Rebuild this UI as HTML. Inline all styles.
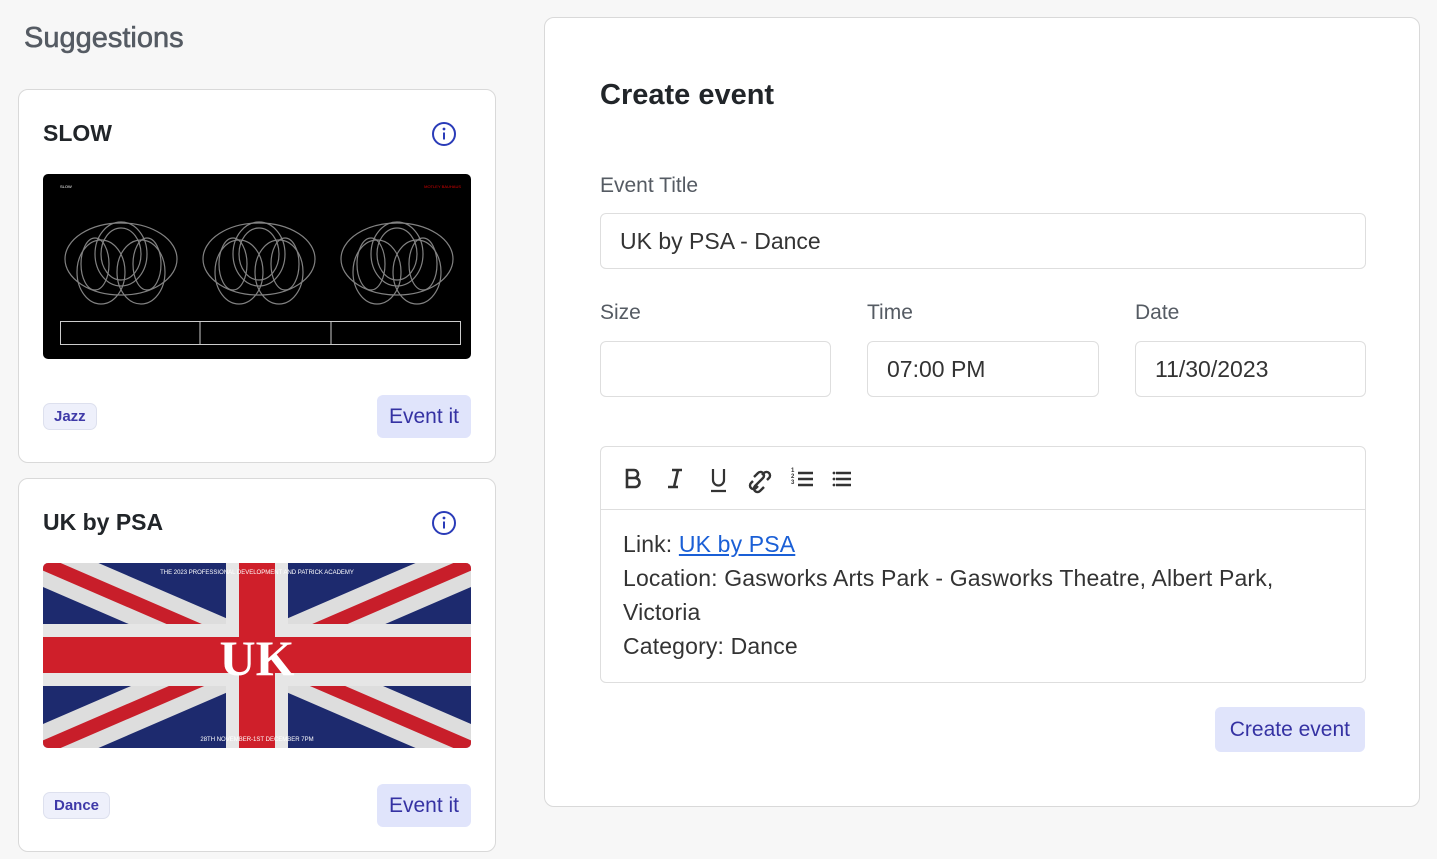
<!DOCTYPE html>
<html><head><meta charset="utf-8"><style>
*{box-sizing:border-box;margin:0;padding:0}
body{width:1437px;height:859px;background:#f7f7f7;font-family:"Liberation Sans",sans-serif;position:relative;overflow:hidden;color:#212529}
.h{position:absolute;left:24px;top:22px;font-size:29px;color:#555b63;-webkit-text-stroke:0.6px #555b63}
.card{position:absolute;left:18px;width:478px;height:374px;background:#fff;border:1px solid #d9d9d9;border-radius:10px}
.title{position:absolute;left:24px;top:30px;font-size:23px;font-weight:bold;color:#212529}
.info{position:absolute;left:412px;top:31px}
.img{position:absolute;left:24px;top:84px;width:428px;height:185px;border-radius:5px;overflow:hidden}
.tag{position:absolute;left:24px;top:313px;height:27px;padding:0 10px;border:1px solid #dde0ee;background:#eef0fb;border-radius:7px;font-size:15px;font-weight:bold;color:#3f3aa8;line-height:25px}
.btn{position:absolute;right:24px;top:305px;height:43px;padding:0 12px;background:#e0e4fb;border-radius:6px;font-size:21px;color:#3532a3;line-height:43px}
.panel{position:absolute;left:544px;top:17px;width:876px;height:790px;background:#fff;border:1px solid #d9d9d9;border-radius:10px}
.lbl{position:absolute;font-size:21px;color:#555b63}
.inp{position:absolute;height:56px;border:1px solid #dedede;border-radius:6px;font-size:23px;color:#333;padding-left:19px;line-height:54px}
</style></head><body>
<div class="h">Suggestions</div>

<div class="card" style="top:89px">
<div class="title">SLOW</div>
<svg class="info" width="26" height="26" viewBox="0 0 26 26"><circle cx="13" cy="13" r="11" fill="none" stroke="#2a3bb8" stroke-width="2"/><circle cx="13" cy="8" r="1.4" fill="#2a3bb8"/><path d="M13 11.5v7" stroke="#2a3bb8" stroke-width="2"/></svg>
<div class="img" style="background:#000">
<svg width="428" height="185">
<g fill="none" stroke="#999" stroke-width="1.2" opacity=".85">
<g id="hd"><ellipse cx="78" cy="85" rx="56" ry="36"/><ellipse cx="78" cy="80" rx="26" ry="32"/><ellipse cx="78" cy="80" rx="20" ry="26"/><ellipse cx="58" cy="98" rx="24" ry="32"/><ellipse cx="98" cy="98" rx="24" ry="32"/><ellipse cx="52" cy="90" rx="14" ry="26"/><ellipse cx="104" cy="90" rx="14" ry="26"/></g>
<use href="#hd" x="138"/><use href="#hd" x="276"/>
</g>
<rect x="17.5" y="147.5" width="400" height="23" fill="none" stroke="#ccc"/>
<path d="M157 148v22M288 148v22" stroke="#ccc"/>
<text x="17" y="14" fill="#fff" font-size="4">SLOW</text>
<text x="418" y="14" fill="#d00" font-size="4" text-anchor="end">MOTLEY BAUHAUS</text>
</svg></div>
<div class="tag">Jazz</div>
<div class="btn">Event it</div>
</div>

<div class="card" style="top:478px">
<div class="title">UK by PSA</div>
<svg class="info" width="26" height="26" viewBox="0 0 26 26"><circle cx="13" cy="13" r="11" fill="none" stroke="#2a3bb8" stroke-width="2"/><circle cx="13" cy="8" r="1.4" fill="#2a3bb8"/><path d="M13 11.5v7" stroke="#2a3bb8" stroke-width="2"/></svg>
<div class="img">
<svg width="428" height="185">
<rect width="428" height="185" fill="#1d2a6e"/>
<path d="M0 0L428 185M428 0L0 185" stroke="#ddd" stroke-width="44"/>
<path d="M0 0L428 185M428 0L0 185" stroke="#c81e2a" stroke-width="14"/>
<path d="M214 0v185M0 92h428" stroke="#e6e6e6" stroke-width="62"/>
<path d="M214 0v185M0 92h428" stroke="#cf1f2a" stroke-width="36"/>
<text x="214" y="112" fill="#fff" font-family="Liberation Serif" font-size="50" font-weight="bold" text-anchor="middle">UK</text>
<text x="214" y="11" fill="#fff" font-size="6" text-anchor="middle">THE 2023 PROFESSIONAL DEVELOPMENT AND PATRICK ACADEMY</text>
<text x="214" y="178" fill="#fff" font-size="6" text-anchor="middle">28TH NOVEMBER-1ST DECEMBER 7PM</text>
</svg></div>
<div class="tag">Dance</div>
<div class="btn">Event it</div>
</div>

<div class="panel">
<div style="position:absolute;left:55px;top:61px;font-size:29px;font-weight:bold;color:#212529">Create event</div>
<div class="lbl" style="left:55px;top:156px">Event Title</div>
<div class="inp" style="left:55px;top:195px;width:766px">UK by PSA - Dance</div>
<div class="lbl" style="left:55px;top:283px">Size</div>
<div class="lbl" style="left:322px;top:283px">Time</div>
<div class="lbl" style="left:590px;top:283px">Date</div>
<div class="inp" style="left:55px;top:323px;width:231px"></div>
<div class="inp" style="left:322px;top:323px;width:232px">07:00 PM</div>
<div class="inp" style="left:590px;top:323px;width:231px">11/30/2023</div>
<div style="position:absolute;left:55px;top:428px;width:766px;height:237px;border:1px solid #dedede;border-radius:6px">
<div style="height:63px;border-bottom:1px solid #dedede;position:relative">
<svg width="260" height="63" style="position:absolute;left:0;top:0" fill="none" stroke="#333" stroke-width="2.6">
<path d="M26 23h7a4 4 0 0 1 0 8h-7zM26 31h8a4.5 4.5 0 0 1 0 9h-8zM26 22v19"/>
<path d="M71 23h10M67 40h10M77 23l-4 17"/>
<path d="M112 22v11a5.5 5.5 0 0 0 11 0V22M110 44h15" stroke-width="2.2"/>
<path d="M153 30l4-4a3.5 3.5 0 0 1 5 5l-4 4M163 40l-4 4a3.5 3.5 0 0 1-5-5l4-4M156 37l5-5M152 34l-2 2a3.5 3.5 0 0 0 5 5l2-2M161 28l2-2a3.5 3.5 0 0 1 5 5l-2 2" stroke-width="2.4"/>
<path d="M197 26h15M197 32h15M197 38h15"/>
<path d="M235 26h15M235 32h15M235 38h15"/>
</svg>
<div style="position:absolute;left:190px;top:21px;font-size:6px;line-height:6px;font-weight:bold;color:#333">1<br>2<br>3</div>
<svg width="6" height="20" style="position:absolute;left:231px;top:23px"><circle cx="2" cy="3" r="1.4" fill="#333"/><circle cx="2" cy="9" r="1.4" fill="#333"/><circle cx="2" cy="15" r="1.4" fill="#333"/></svg>
</div>
<div style="padding:17px 22px;font-size:23px;line-height:34px;color:#333;letter-spacing:0.15px">Link: <span style="color:#1a5fd6;text-decoration:underline">UK by PSA</span><br>Location: Gasworks Arts Park - Gasworks Theatre, Albert Park, Victoria<br>Category: Dance</div>
</div>
<div style="position:absolute;right:54px;top:689px;height:45px;padding:0 15px;background:#e0e4fb;border-radius:6px;font-size:21px;color:#3532a3;line-height:45px">Create event</div>
</div>
</body></html>
